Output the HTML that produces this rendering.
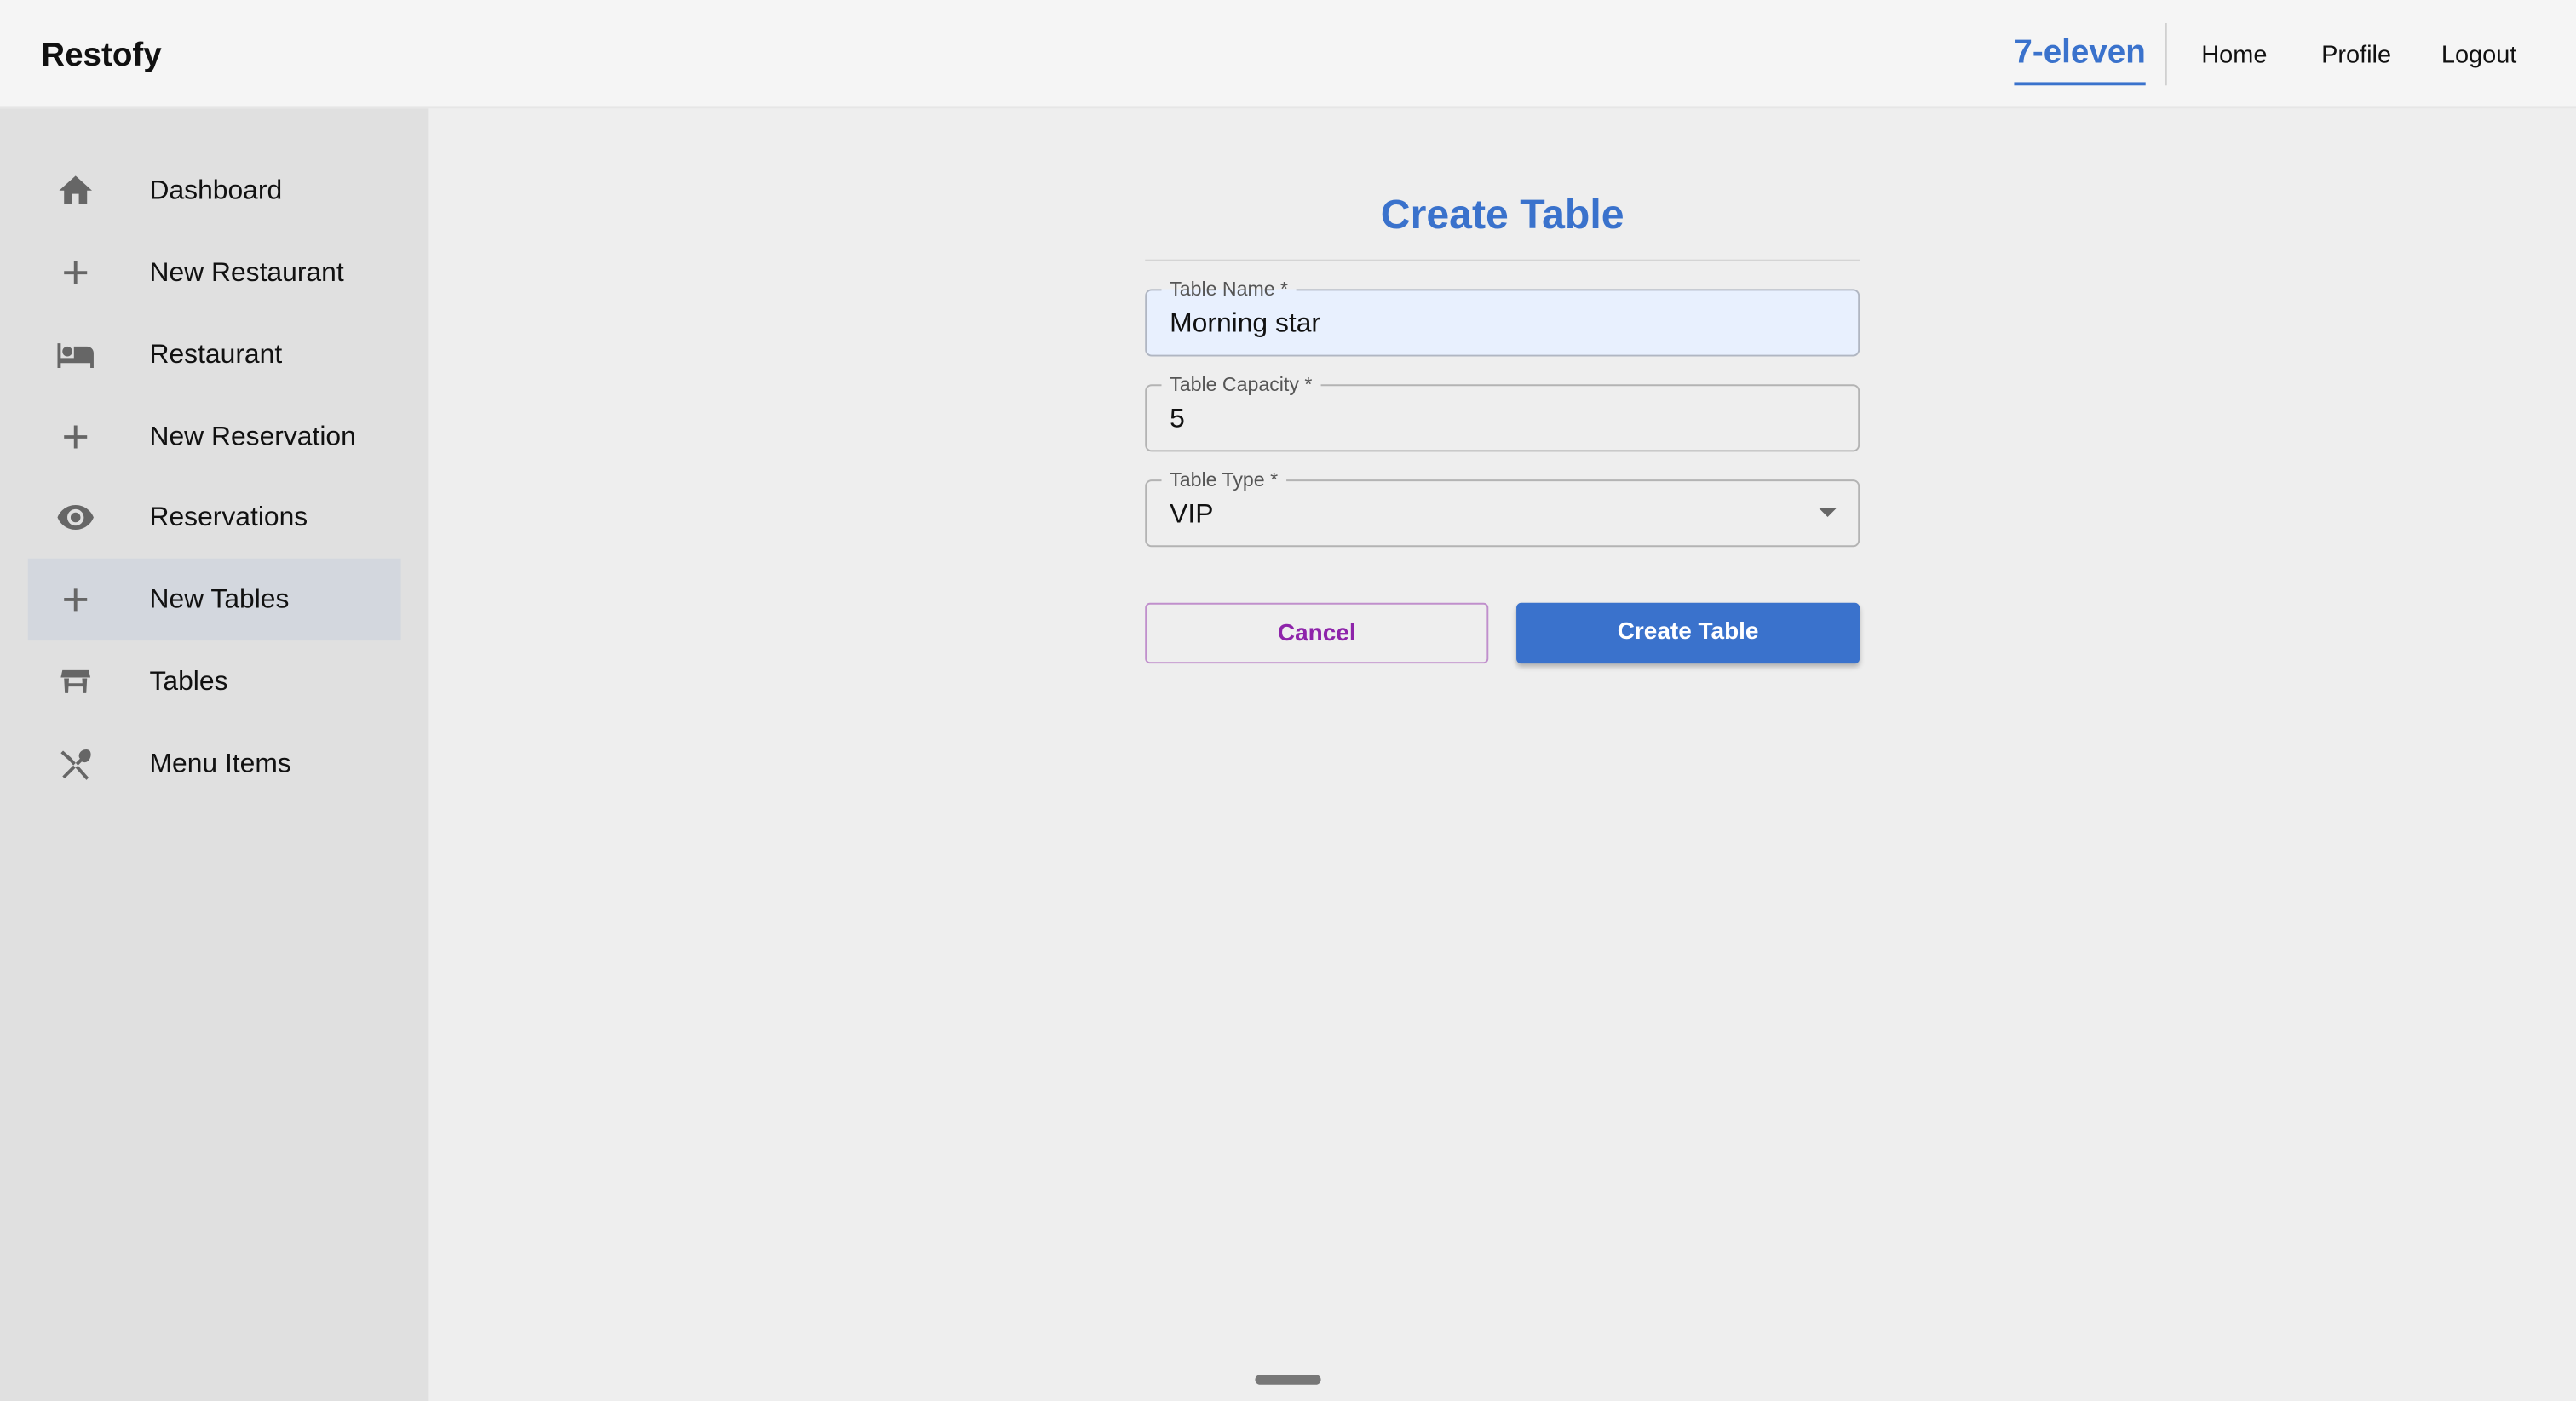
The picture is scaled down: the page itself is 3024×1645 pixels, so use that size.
<!DOCTYPE html>
<html><head><meta charset="utf-8"><style>
*{margin:0;padding:0;box-sizing:border-box}
html,body{width:3024px;height:1644px;overflow:hidden;background:#eee;font-family:"Liberation Sans",Arial,sans-serif}
#w{position:absolute;left:0;top:0;width:1568px;height:853px;transform:scale(1.92857);transform-origin:0 0;background:#eee}
.hdr{position:absolute;left:0;top:0;width:1568px;height:66px;background:#f5f5f5;border-bottom:1px solid #e6e6e6}
.logo{position:absolute;left:25px;top:23px;font-size:20px;font-weight:bold;color:#111}
.brand{position:absolute;left:1226px;top:21px;font-size:20px;font-weight:bold;color:#3a72cc;border-bottom:2px solid #3a72cc;padding-bottom:6px}
.vd{position:absolute;left:1318px;top:14px;width:1px;height:38px;background:#d0d0d0}
.nl{position:absolute;top:25px;font-size:15px;color:#111}
.side{position:absolute;left:0;top:66px;width:261px;height:787px;background:#e0e0e0}
.it{position:absolute;left:17px;width:227px;height:50px}
.it.sel{background:#d3d7de}
.it svg{position:absolute;left:17px;top:13px;width:24px;height:24px;fill:#666}
.it span{position:absolute;left:74px;top:16px;font-size:16.5px;color:#111}
.title{position:absolute;left:697px;width:435px;top:117px;text-align:center;font-size:25px;font-weight:bold;color:#3a72cc}
.hr{position:absolute;left:697px;width:435px;top:158px;height:1px;background:#d4d4d4}
.f{position:absolute;left:697px;width:435px;height:41px;border:1px solid #b3b3b3;border-radius:4px}
.f.a{background:#e8f0fe;border-color:#b0b6c2}
.f label{position:absolute;left:9px;top:-9px;font-size:12px;color:#555;background:#eee;padding:0 5px;line-height:16px}
.f.a label{background:linear-gradient(#eee 50%,#e8f0fe 50%)}
.f .v{position:absolute;left:14px;top:11px;font-size:16.5px;color:#111}
.btn{position:absolute;top:367px;height:37px;width:209px;border-radius:3px;text-align:center;line-height:37px;font-size:14.5px;font-weight:bold}
.handle{position:absolute;left:764px;top:837px;width:40px;height:6px;border-radius:3px;background:#777}
</style></head><body><div id="w">
<div class="hdr">
<div class="logo">Restofy</div>
<div class="brand">7-eleven</div>
<div class="vd"></div>
<div class="nl" style="left:1340px">Home</div>
<div class="nl" style="left:1413px">Profile</div>
<div class="nl" style="left:1486px">Logout</div>
</div>
<div class="side">
<div class="it" style="top:25px"><svg viewBox="0 0 24 24"><path d="M10 20v-6h4v6h5v-8h3L12 3 2 12h3v8z"/></svg><span>Dashboard</span></div>
<div class="it" style="top:75px"><svg viewBox="0 0 24 24"><path d="M19 13h-6v6h-2v-6H5v-2h6V5h2v6h6z"/></svg><span>New Restaurant</span></div>
<div class="it" style="top:125px"><svg viewBox="0 0 24 24"><path d="M7 13c1.66 0 3-1.34 3-3S8.66 7 7 7s-3 1.34-3 3 1.34 3 3 3zm12-6h-8v7H3V5H1v15h2v-3h18v3h2v-9c0-2.21-1.79-4-4-4z"/></svg><span>Restaurant</span></div>
<div class="it" style="top:175px"><svg viewBox="0 0 24 24"><path d="M19 13h-6v6h-2v-6H5v-2h6V5h2v6h6z"/></svg><span>New Reservation</span></div>
<div class="it" style="top:224px"><svg viewBox="0 0 24 24"><path d="M12 4.5C7 4.5 2.73 7.61 1 12c1.73 4.39 6 7.5 11 7.5s9.27-3.11 11-7.5c-1.73-4.39-6-7.5-11-7.5zM12 17c-2.76 0-5-2.24-5-5s2.24-5 5-5 5 2.24 5 5-2.24 5-5 5zm0-8c-1.66 0-3 1.34-3 3s1.34 3 3 3 3-1.34 3-3-1.34-3-3-3z"/></svg><span>Reservations</span></div>
<div class="it sel" style="top:274px"><svg viewBox="0 0 24 24"><path d="M19 13h-6v6h-2v-6H5v-2h6V5h2v6h6z"/></svg><span>New Tables</span></div>
<div class="it" style="top:324px"><svg viewBox="0 0 24 24"><path d="M3 9.5L4 5h16l1 4.5zM5 10h3l-.5 9H5.5zm11 0h3l-.5 9h-2zM7.5 13h9v2h-9z"/></svg><span>Tables</span></div>
<div class="it" style="top:374px"><svg viewBox="0 0 24 24"><path d="M3 5.5l1.4-1.4 4.6 3.9 11 12.5-1.4 1.4L8 10zM20.5 4c-1.5-1.5-5-.5-6 1.5-.7 1.2-.6 2.6.2 3.4L4 19.6 5.4 21l10.4-10.3c.9.6 2.3.6 3.4-.1 2-1.2 2.8-5 1.3-6.6z"/></svg><span>Menu Items</span></div>
</div>
<div class="title">Create Table</div>
<div class="hr"></div>
<div class="f a" style="top:176px"><label>Table Name *</label><div class="v">Morning star</div></div>
<div class="f" style="top:234px"><label>Table Capacity *</label><div class="v">5</div></div>
<div class="f" style="top:292px"><label>Table Type *</label><div class="v">VIP</div>
<svg style="position:absolute;right:13px;top:16px" width="11" height="6" viewBox="0 0 10 5"><path d="M0 0h10L5 5z" fill="#666"/></svg></div>
<div class="btn" style="left:697px;border:1px solid #c08fcc;color:#8e24aa">Cancel</div>
<div class="btn" style="left:923px;background:#3a72cc;color:#fff;box-shadow:0 2px 3px rgba(0,0,0,.25)">Create Table</div>
<div class="handle"></div>
</div></body></html>
